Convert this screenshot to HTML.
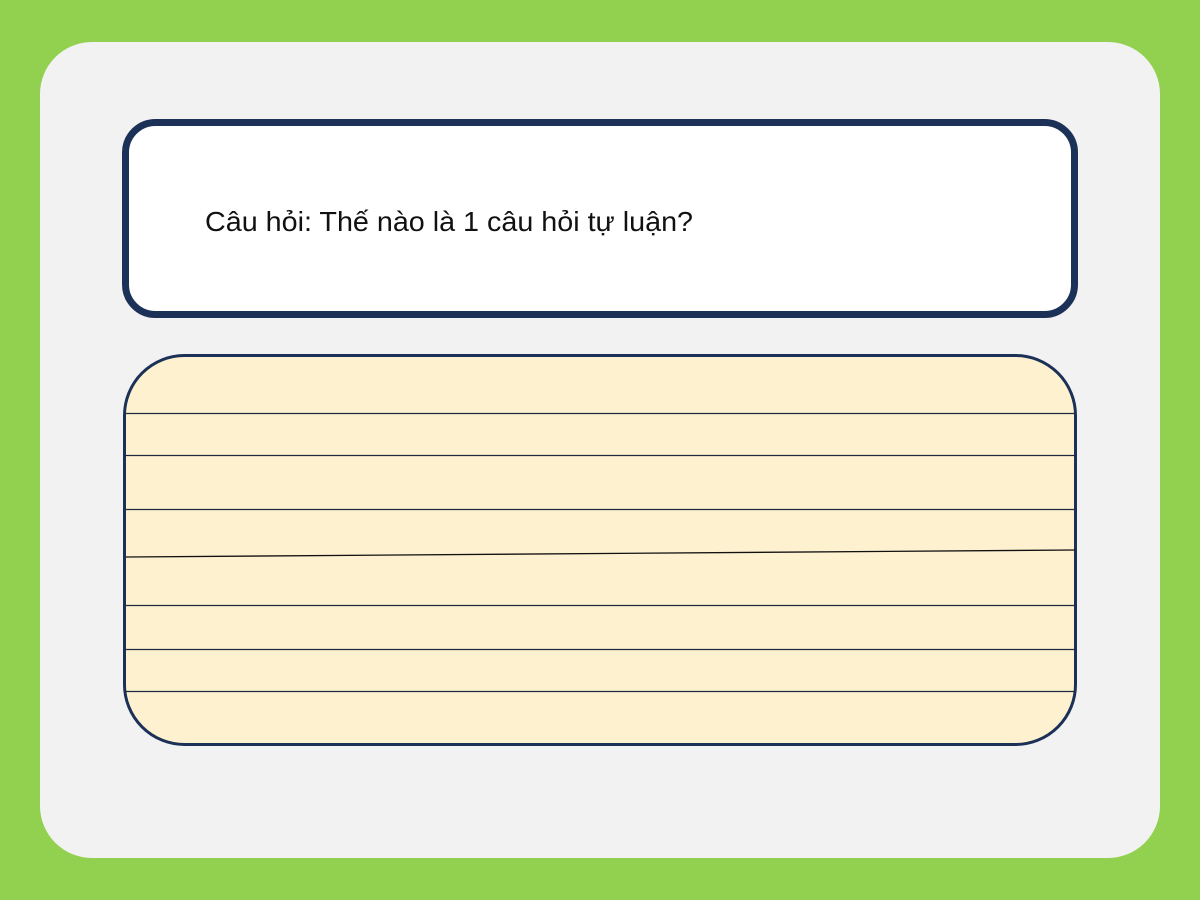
<!DOCTYPE html>
<html><head><meta charset="utf-8"><style>
html,body{margin:0;padding:0;width:1200px;height:900px;overflow:hidden;background:#92d050}
svg{display:block}
</style></head><body>
<svg width="1200" height="900" viewBox="0 0 1200 900" xmlns="http://www.w3.org/2000/svg">
<rect x="0" y="0" width="1200" height="900" fill="#92d050"/>
<rect x="40" y="42" width="1120" height="816" rx="52" fill="#f2f2f2"/>
<rect x="125.5" y="122.5" width="949" height="192" rx="30" fill="#fff" stroke="#1c3158" stroke-width="7"/>
<text x="205" y="231" font-family="'Liberation Sans','DejaVu Sans',sans-serif" font-size="28" fill="#111" textLength="488" lengthAdjust="spacingAndGlyphs">Câu hỏi: Thế nào là 1 câu hỏi tự luận?</text>
<rect x="124.5" y="355.5" width="951" height="389" rx="60" fill="#fef1d0" stroke="#1c3158" stroke-width="3"/>
<g stroke="#1c2a44" stroke-width="1.3">
<line x1="125" y1="413.5" x2="1075" y2="413.5"/>
<line x1="125" y1="455.5" x2="1075" y2="455.5"/>
<line x1="125" y1="509.5" x2="1075" y2="509.5"/>
<line x1="126" y1="557" x2="1075" y2="550" stroke="#111"/>
<line x1="125" y1="605.5" x2="1075" y2="605.5"/>
<line x1="125" y1="649.5" x2="1075" y2="649.5"/>
<line x1="125" y1="691.5" x2="1075" y2="691.5"/>
</g>
</svg>
</body></html>
